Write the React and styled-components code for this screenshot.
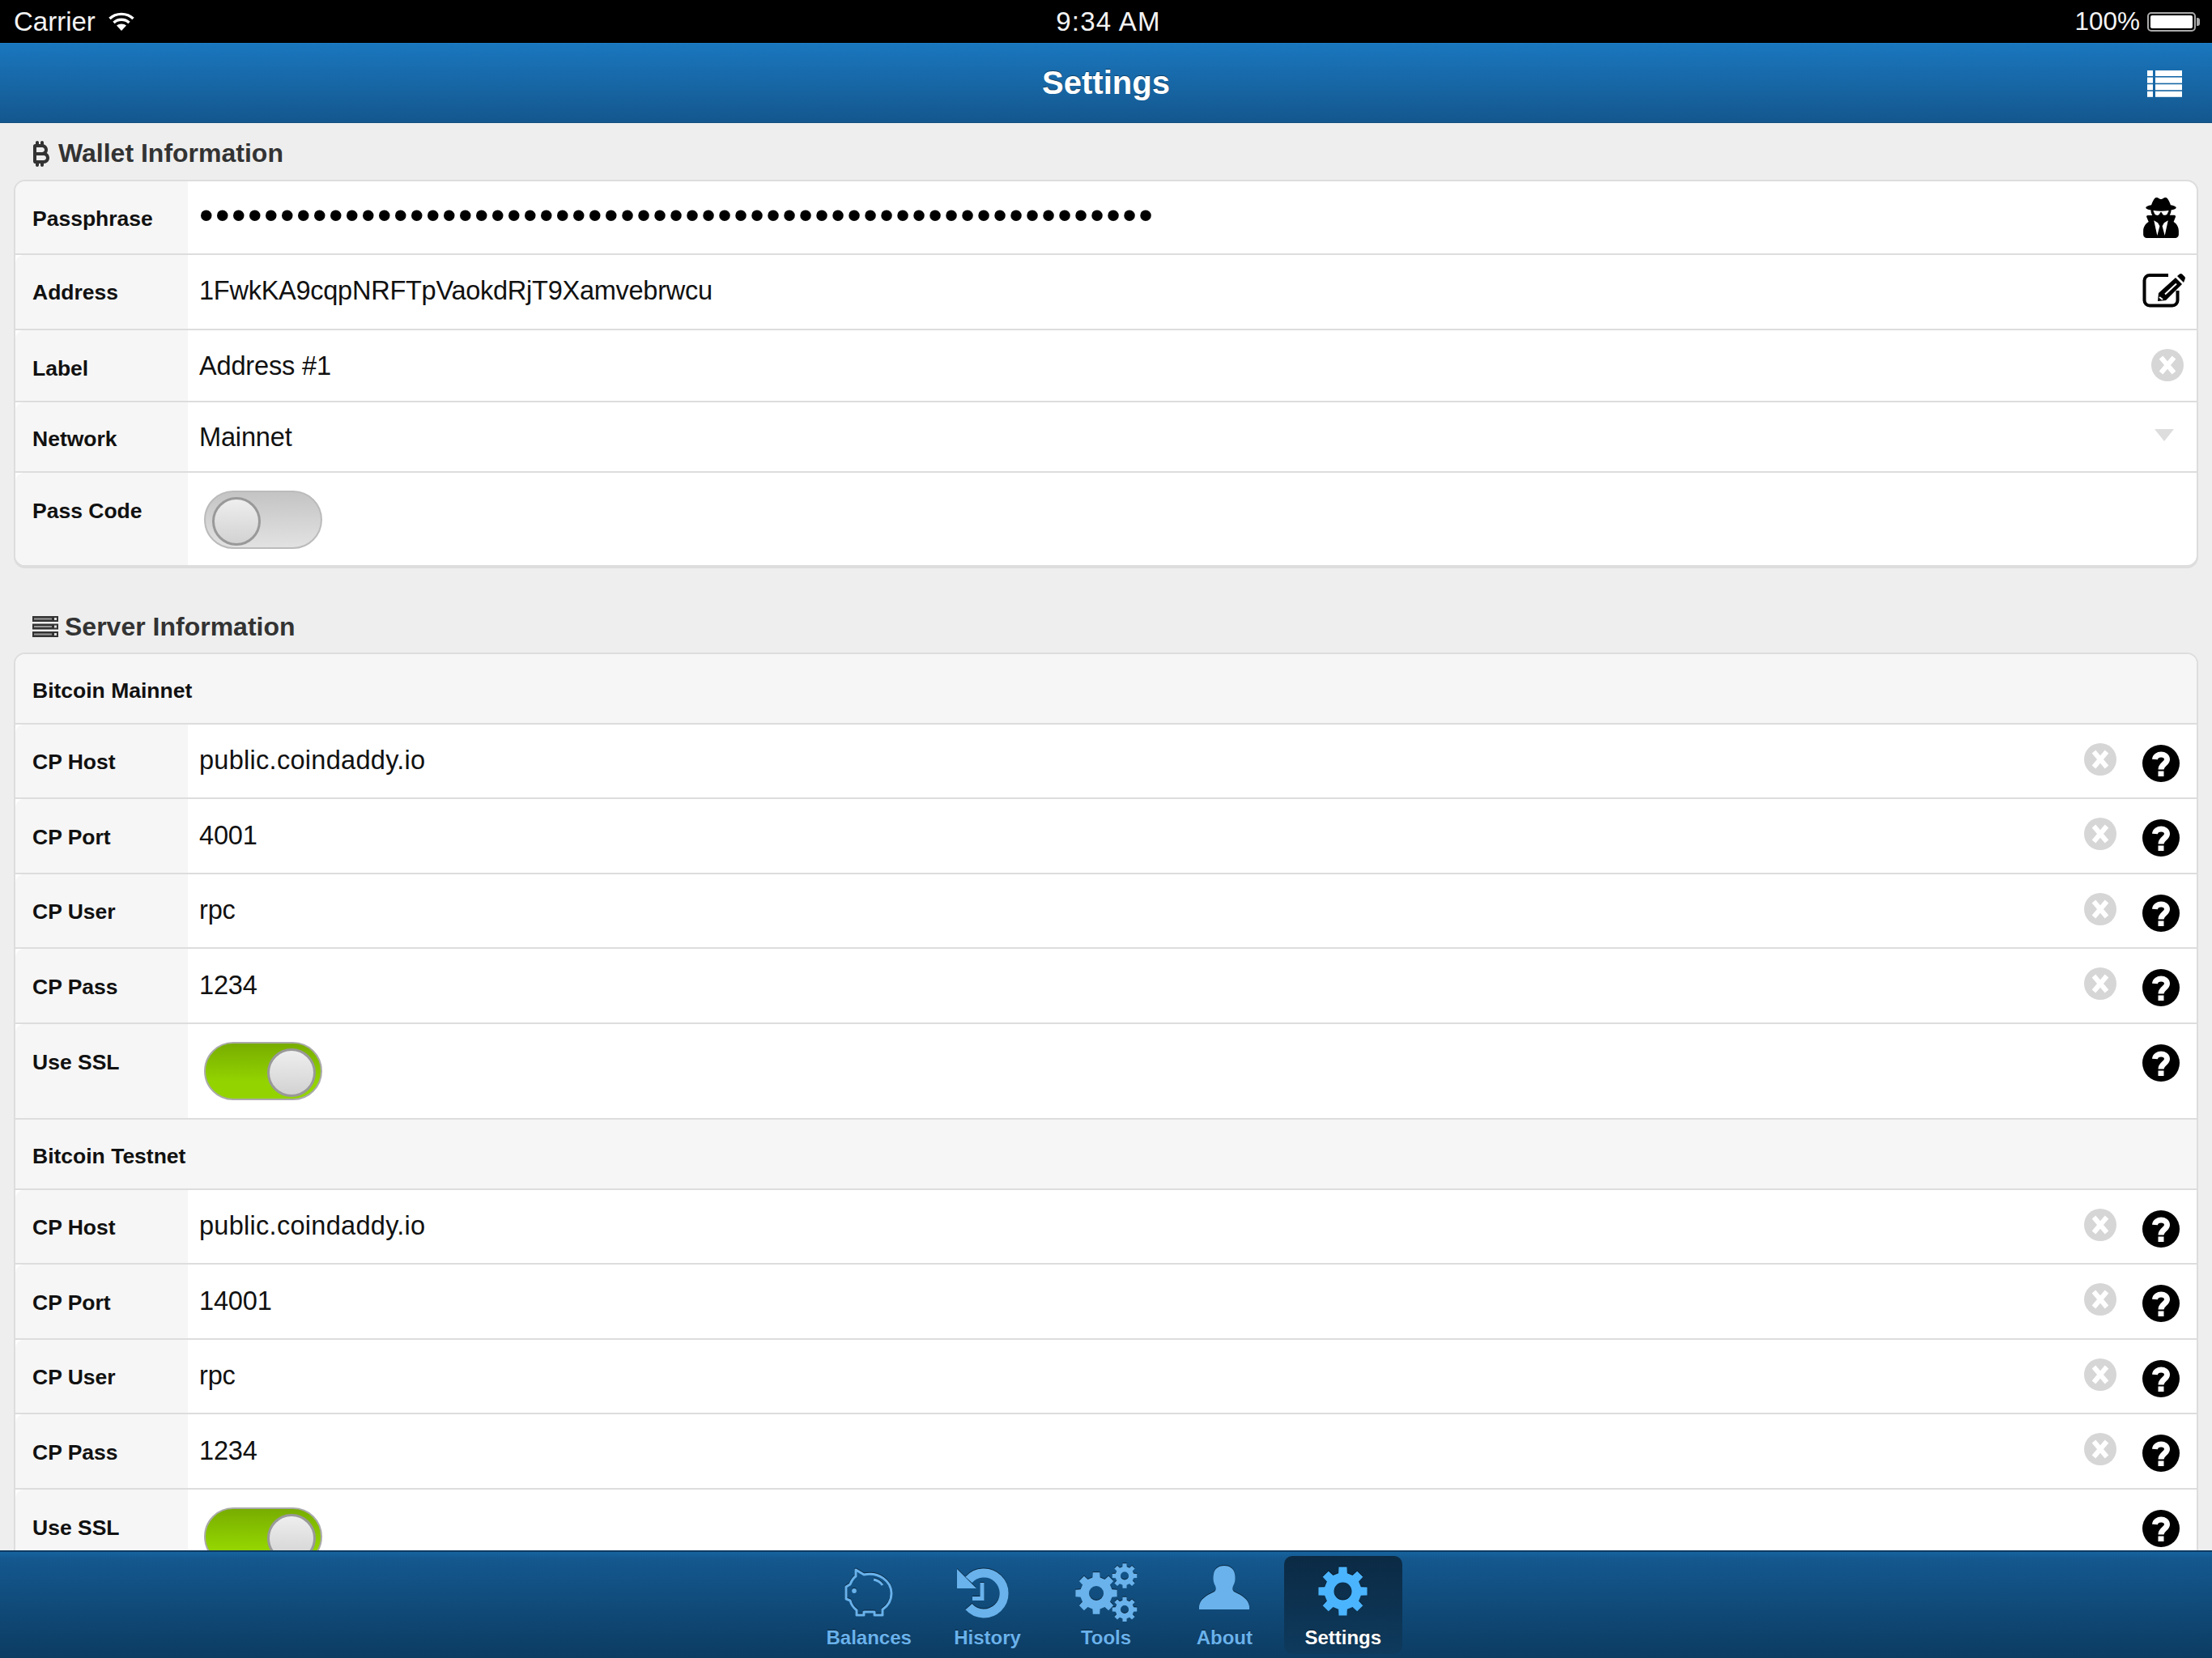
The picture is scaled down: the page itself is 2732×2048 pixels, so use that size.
import React from 'react';
import styled, { createGlobalStyle } from 'styled-components';
import { FaBitcoinSign } from 'react-icons/fa6';
import { FaUserSecret } from 'react-icons/fa';

const GlobalStyle = createGlobalStyle`
  html, body { margin: 0; padding: 0; background: #eee; }
  body { font-family: "Liberation Sans", Arial, sans-serif; }
`;

// layout
const Page = styled.div`
  width: 2732px;
  height: 2048px;
  display: flex;
  flex-direction: column;
  overflow: hidden;
  background: #eee;
`;
const StatusBar = styled.div`
  height: 53px;
  flex: none;
  background: #000;
  color: #f4f4f4;
  display: grid;
  grid-template-columns: 1fr auto 1fr;
  align-items: center;
  padding: 0 20px 0 17px;
`;
const StatusLeft = styled.div`
  display: flex;
  align-items: center;
  gap: 16px;
  font-size: 33px;
`;
const StatusTime = styled.div`
  font-size: 33px;
  letter-spacing: 1.2px;
  margin-left: 9px;
`;
const StatusRight = styled.div`
  display: flex;
  align-items: center;
  justify-content: flex-end;
  gap: 9px;
  font-size: 31.5px;
`;
const Battery = styled.div`
  width: 60px;
  height: 24px;
  box-sizing: border-box;
  border: 2px solid #aaa;
  border-radius: 5px;
  padding: 2px;
  position: relative;
  &::before {
    content: '';
    display: block;
    height: 100%;
    background: #fff;
    border-radius: 2px;
  }
  &::after {
    content: '';
    position: absolute;
    right: -7px;
    top: 5px;
    width: 4px;
    height: 10px;
    background: #aaa;
    border-radius: 0 3px 3px 0;
  }
`;
const Header = styled.header`
  height: 99px;
  flex: none;
  box-sizing: border-box;
  background: linear-gradient(#1a77be, #14578e);
  border-top: 1px solid #1f80c8;
  border-bottom: 1px solid #134d80;
  display: flex;
  align-items: center;
  justify-content: center;
  position: relative;
`;
const Title = styled.h1`
  margin: 0;
  font-size: 40px;
  font-weight: bold;
  color: #fff;
  text-shadow: 0 -1px 1px rgba(0, 0, 0, 0.4);
`;
const MenuIcon = styled.svg`
  position: absolute;
  right: 37px;
  top: 33px;
  width: 43px;
  height: 33px;
  fill: #fff;
`;
const Content = styled.main`
  flex: 1;
  min-height: 0;
  overflow: hidden;
  padding: 0 17px;
`;
const SectionTitle = styled.h2`
  margin: 0;
  height: ${props => props.$height}px;
  padding: ${props => props.$top}px 0 0 23px;
  box-sizing: border-box;
  display: flex;
  align-items: flex-start;
  gap: ${props => props.$gap}px;
  font-size: 32px;
  line-height: 40px;
  font-weight: bold;
  color: #333;
  svg { flex: none; }
`;
const Card = styled.section`
  background: #fff;
  border: 2px solid #ddd;
  border-radius: 14px;
  box-shadow: 0 2px 0 #ddd;
  overflow: hidden;
`;
const GroupTitle = styled.div`
  height: ${props => props.$height}px;
  box-sizing: border-box;
  background: #f6f6f6;
  border-bottom: 2px solid #ddd;
  padding: 5px 0 0 21px;
  display: flex;
  align-items: center;
  font-size: 26.5px;
  font-weight: bold;
  color: #111;
`;
const Row = styled.div`
  height: ${props => props.$height}px;
  box-sizing: border-box;
  display: flex;
  border-bottom: ${props => (props.$last ? 'none' : '2px solid #ddd')};
`;
const Label = styled.div`
  width: 213px;
  flex: none;
  box-sizing: border-box;
  background: #f6f6f6;
  padding: ${props => props.$top}px 0 0 21px;
  font-size: 26.5px;
  line-height: 32px;
  font-weight: bold;
  color: #111;
  border-top-left-radius: 10px;
`;
const Field = styled.div`
  flex: 1;
  min-width: 0;
  display: flex;
  align-items: flex-start;
  padding: ${props => props.$top}px 0 0 14px;
  font-size: 32.6px;
  line-height: 38px;
  letter-spacing: ${props => props.$spacing || '-0.2px'};
  color: #111;
`;
const Dots = styled.span`
  font-size: 50px;
  letter-spacing: 2.5px;
  line-height: 38px;
  color: #000;
`;
const Actions = styled.div`
  position: relative;
  flex: none;
  width: 0;
  align-self: stretch;
`;
const Switch = styled.div`
  width: 146px;
  height: 72px;
  box-sizing: border-box;
  margin: 22px 0 0 6px;
  border-radius: 36px;
  border: 2px solid ${props => (props.$on ? '#aaa' : '#bbb')};
  background: ${props => (props.$on
    ? 'linear-gradient(#78ad00, #93d400 70%)'
    : 'linear-gradient(#c4c4c4, #e2e2e2)')};
  display: flex;
  align-items: center;
  justify-content: ${props => (props.$on ? 'flex-end' : 'flex-start')};
  padding: ${props => (props.$on ? '3px 6px 0 0' : '3px 0 0 8px')};
`;
const Knob = styled.div`
  width: 60px;
  height: 60px;
  box-sizing: border-box;
  border-radius: 50%;
  border: 3px solid #999;
  background: linear-gradient(#eee, #d2d2d2);
`;
const ClearButton = styled.svg`
  position: absolute;
  right: ${props => props.$right}px;
  top: ${props => props.$top}px;
  width: 40px;
  height: 40px;
`;
const Caret = styled.div`
  position: absolute;
  right: 28px;
  top: 33px;
  width: 0;
  height: 0;
  border-left: 12px solid transparent;
  border-right: 12px solid transparent;
  border-top: 15px solid #ddd;
`;
const IconSlot = styled.div`
  position: absolute;
  right: ${props => props.$right}px;
  top: ${props => props.$top}px;
  display: flex;
  color: #000;
`;

// tab bar
const TabBar = styled.footer`
  height: 133px;
  flex: none;
  box-sizing: border-box;
  background: linear-gradient(#17649f 0, #14588f 8px, #0c3c62);
  border-top: 2px solid #0d3b63;
  padding-top: 5px;
  display: flex;
  justify-content: center;
`;
const Tab = styled.div`
  width: 146.4px;
  height: 121px;
  box-sizing: border-box;
  border-radius: 10px;
  background: ${props => (props.$active ? 'linear-gradient(#0b2a44, #0e3a5d)' : 'transparent')};
  color: ${props => (props.$active ? '#4bb4ff' : '#69b2ec')};
  display: flex;
  flex-direction: column;
  align-items: center;
`;
const TabIcon = styled.div`
  height: 88px;
  padding-top: ${props => props.$top}px;
  box-sizing: border-box;
  filter: drop-shadow(0 -1px 0 rgba(0, 0, 0, 0.55));
  svg { display: block; }
`;
const TabLabel = styled.div`
  font-size: 24px;
  line-height: 26px;
  font-weight: bold;
  color: ${props => (props.$active ? '#fff' : '#69b2ec')};
  text-shadow: 0 -1px 0 rgba(0, 0, 0, 0.5);
`;

// drawings
const gearPath = (cx, cy, R, root, hole, teeth = 8) => {
  const step = (Math.PI * 2) / teeth;
  const pt = (r, a) => `${(cx + r * Math.cos(a)).toFixed(2)} ${(cy + r * Math.sin(a)).toFixed(2)}`;
  let d = '';
  for (let i = 0; i < teeth; i++) {
    const a = i * step - Math.PI / 2;
    d += `${i ? 'L' : 'M'}${pt(root, a - step * 0.3)} L${pt(R, a - step * 0.21)} L${pt(R, a + step * 0.21)} L${pt(root, a + step * 0.3)} `;
  }
  d += 'Z ';
  d += `M${cx - hole} ${cy} a${hole} ${hole} 0 1 0 ${hole * 2} 0 a${hole} ${hole} 0 1 0 ${-hole * 2} 0 Z`;
  return d;
};

const WifiIcon = () => (
  <svg width="32" height="23" viewBox="0 0 32 23" fill="none" stroke="#fff" strokeWidth="3.4">
    <path d="M1.5 8 C9 0.5 23 0.5 30.5 8" />
    <path d="M6.5 13 C11.5 8 20.5 8 25.5 13" />
    <path d="M16 23 L10 16.5 C13 13.8 19 13.8 22 16.5 Z" fill="#fff" stroke="none" />
  </svg>
);

const ServerIcon = () => (
  <svg width="32" height="26" viewBox="0 0 32 26" style={{ marginTop: 7 }}>
    {[0, 9.5, 19].map(y => (
      <g key={y}>
        <rect x="0" y={y} width="32" height="7" fill="#333" />
        <rect x="2" y={y + 2.5} width="22" height="2" fill="#999" />
        <rect x="27" y={y + 2} width="3" height="3" fill="#ddd" />
      </g>
    ))}
  </svg>
);

const ClearIcon = ({ right, top }) => (
  <ClearButton $right={right} $top={top} viewBox="0 0 40 40">
    <circle cx="20" cy="20" r="20" fill="#d6d6d6" />
    <path d="M12 10.5 L28 29.5 M28 10.5 L12 29.5" stroke="#fff" strokeWidth="6" />
  </ClearButton>
);

const EditIcon = () => (
  <svg width="54" height="44" viewBox="0 0 54 44" fill="#000">
    <path d="M32 3 H9 a6.5 6.5 0 0 0 -6.5 6.5 V34 a6.5 6.5 0 0 0 6.5 6.5 H37 a6.5 6.5 0 0 0 6.5 -6.5 V22" fill="none" stroke="#000" strokeWidth="4" />
    <path d="M19 35 L20 25 L41 6 L49 14 L29 34 Z" />
    <path d="M43 4 L46 1.5 Q47.500 0.500 49 1.500 L52.500 5 Q53.500 6.500 52.500 8 L51 12 Z" />
    <path d="M28 26.500 L42 13.500" stroke="#fff" strokeWidth="2" />
    <path d="M21 30 L25 33" stroke="#fff" strokeWidth="2" />
  </svg>
);

const HelpIcon = () => (
  <svg width="46" height="46" viewBox="0 0 46 46">
    <circle cx="23" cy="23" r="23" fill="#000" />
    <path d="M15.500 18 C16 10 30.500 10 30.500 18 C30.500 23.500 23 24 23 30.500" fill="none" stroke="#fff" strokeWidth="7" />
    <rect x="19.500" y="32.500" width="7" height="6.500" fill="#fff" />
  </svg>
);

const PiggyIcon = () => (
  <svg width="62" height="62" viewBox="-1 -1 62 62" fill="none" stroke="currentColor" strokeWidth="3" strokeLinejoin="round">
    <path d="M14 2 L24 8 C42 4 58 16 58 31 C58 40 53 47 47 51 L47 58 H37 V54 H24 V58 H15 V52 C10 48 8 44 7 40 L2 38 V23 L7 20 C9 15 11 12 14 10 Z" />
    <path d="M36 14 C41 15 45 18 47 21" />
    <circle cx="12" cy="28" r="1.400" fill="currentColor" />
  </svg>
);

const HistoryIcon = () => (
  <svg width="65" height="64" viewBox="0 0 65 64" fill="none" style={{ marginLeft: -13 }}>
    <path d="M15.500 15.300 A25 25 0 1 1 15.500 48.700" stroke="currentColor" strokeWidth="11" />
    <path d="M1 2 V26 H25 Z" fill="currentColor" />
    <path d="M32 19 V38.500 H20" stroke="currentColor" strokeWidth="5" />
  </svg>
);

const ToolsIcon = () => (
  <svg width="78" height="72" viewBox="0 0 78 72" fill="currentColor" fillRule="evenodd">
    <path d={gearPath(27, 37, 26, 20, 9)} />
    <path d={gearPath(62, 15.5, 15.5, 11.5, 5)} />
    <path d={gearPath(62, 57, 15.5, 11.5, 5)} />
  </svg>
);

const AboutIcon = () => (
  <svg width="62" height="54" viewBox="0 0 62 54" fill="currentColor">
    <path d="M0 54 V50 C1 42 8 37 19 32 C21 30 21 28 20 25 C17 20 17 14 18 10 C19 3 25 0 31 0 C37 0 43 3 44 10 C45 14 45 20 42 25 C41 28 41 30 43 32 C54 37 61 42 62 50 V54 Z" />
  </svg>
);

const SettingsIcon = () => (
  <svg width="61" height="61" viewBox="0 0 61 61" fill="currentColor" fillRule="evenodd">
    <path d={gearPath(30.5, 30.5, 30.5, 23, 11)} />
  </svg>
);

// data
const tabs = [
  { label: 'Balances', icon: <PiggyIcon />, top: 14 },
  { label: 'History', icon: <HistoryIcon />, top: 14 },
  { label: 'Tools', icon: <ToolsIcon />, top: 9 },
  { label: 'About', icon: <AboutIcon />, top: 12 },
  { label: 'Settings', icon: <SettingsIcon />, top: 13, active: true },
];

const ServerRow = ({ label, value, height, spacing }) => (
  <Row $height={height}>
    <Label $top={(height - 32) / 2}>{label}</Label>
    <Field $top={(height - 38) / 2 - 2} $spacing={spacing}>{value}</Field>
    <Actions>
      <ClearIcon right={99} top={23} />
      <IconSlot $right={21} $top={25}><HelpIcon /></IconSlot>
    </Actions>
  </Row>
);

const SslRow = ({ height, last }) => (
  <Row $height={height} $last={last}>
    <Label $top={31}>Use SSL</Label>
    <Field $top={0}>
      <Switch $on><Knob /></Switch>
    </Field>
    <Actions>
      <IconSlot $right={21} $top={25}><HelpIcon /></IconSlot>
    </Actions>
  </Row>
);

const ServerGroup = ({ title, port, last }) => (
  <>
    <GroupTitle $height={87}>{title}</GroupTitle>
    <ServerRow label="CP Host" value="public.coindaddy.io" height={92} spacing="0.25px" />
    <ServerRow label="CP Port" value={port} height={93} />
    <ServerRow label="CP User" value="rpc" height={92} />
    <ServerRow label="CP Pass" value="1234" height={93} />
    <SslRow height={118} last={last} />
  </>
);

const App = () => (
  <Page>
    <GlobalStyle />
    <StatusBar>
      <StatusLeft>Carrier <WifiIcon /></StatusLeft>
      <StatusTime>9:34 AM</StatusTime>
      <StatusRight>100% <Battery /></StatusRight>
    </StatusBar>
    <Header>
      <Title>Settings</Title>
      <MenuIcon viewBox="0 0 43 33">
        {[0, 8.6, 17.2, 25.8].map(y => (
          <g key={y}>
            <rect x="0" y={y} width="7" height="7" />
            <rect x="10" y={y} width="33" height="7" />
          </g>
        ))}
      </MenuIcon>
    </Header>
    <Content>
      <SectionTitle $height={70} $top={17} $gap={5}>
        <FaBitcoinSign size={32} style={{ marginTop: 5, marginLeft: -5 }} /> Wallet Information
      </SectionTitle>
      <Card>
        <Row $height={91}>
          <Label $top={30}>Passphrase</Label>
          <Field $top={23}><Dots>{'•'.repeat(59)}</Dots></Field>
          <Actions>
            <IconSlot $right={19} $top={20}><FaUserSecret size={50} /></IconSlot>
          </Actions>
        </Row>
        <Row $height={93}>
          <Label $top={30}>Address</Label>
          <Field $top={25} $spacing="-0.3px">1FwkKA9cqpNRFTpVaokdRjT9Xamvebrwcu</Field>
          <Actions>
            <IconSlot $right={13} $top={22}><EditIcon /></IconSlot>
          </Actions>
        </Row>
        <Row $height={89}>
          <Label $top={31}>Label</Label>
          <Field $top={25}>Address #1</Field>
          <Actions><ClearIcon right={16} top={23} /></Actions>
        </Row>
        <Row $height={87}>
          <Label $top={29}>Network</Label>
          <Field $top={24}>Mainnet</Field>
          <Actions><Caret /></Actions>
        </Row>
        <Row $height={114} $last>
          <Label $top={31}>Pass Code</Label>
          <Field $top={0}>
            <Switch><Knob /></Switch>
          </Field>
        </Row>
      </Card>
      <SectionTitle $height={106} $top={54} $gap={8}>
        <ServerIcon /> Server Information
      </SectionTitle>
      <Card>
        <ServerGroup title="Bitcoin Mainnet" port="4001" />
        <ServerGroup title="Bitcoin Testnet" port="14001" last />
      </Card>
    </Content>
    <TabBar>
      {tabs.map(tab => (
        <Tab key={tab.label} $active={tab.active}>
          <TabIcon $top={tab.top}>{tab.icon}</TabIcon>
          <TabLabel $active={tab.active}>{tab.label}</TabLabel>
        </Tab>
      ))}
    </TabBar>
  </Page>
);

export default App;
